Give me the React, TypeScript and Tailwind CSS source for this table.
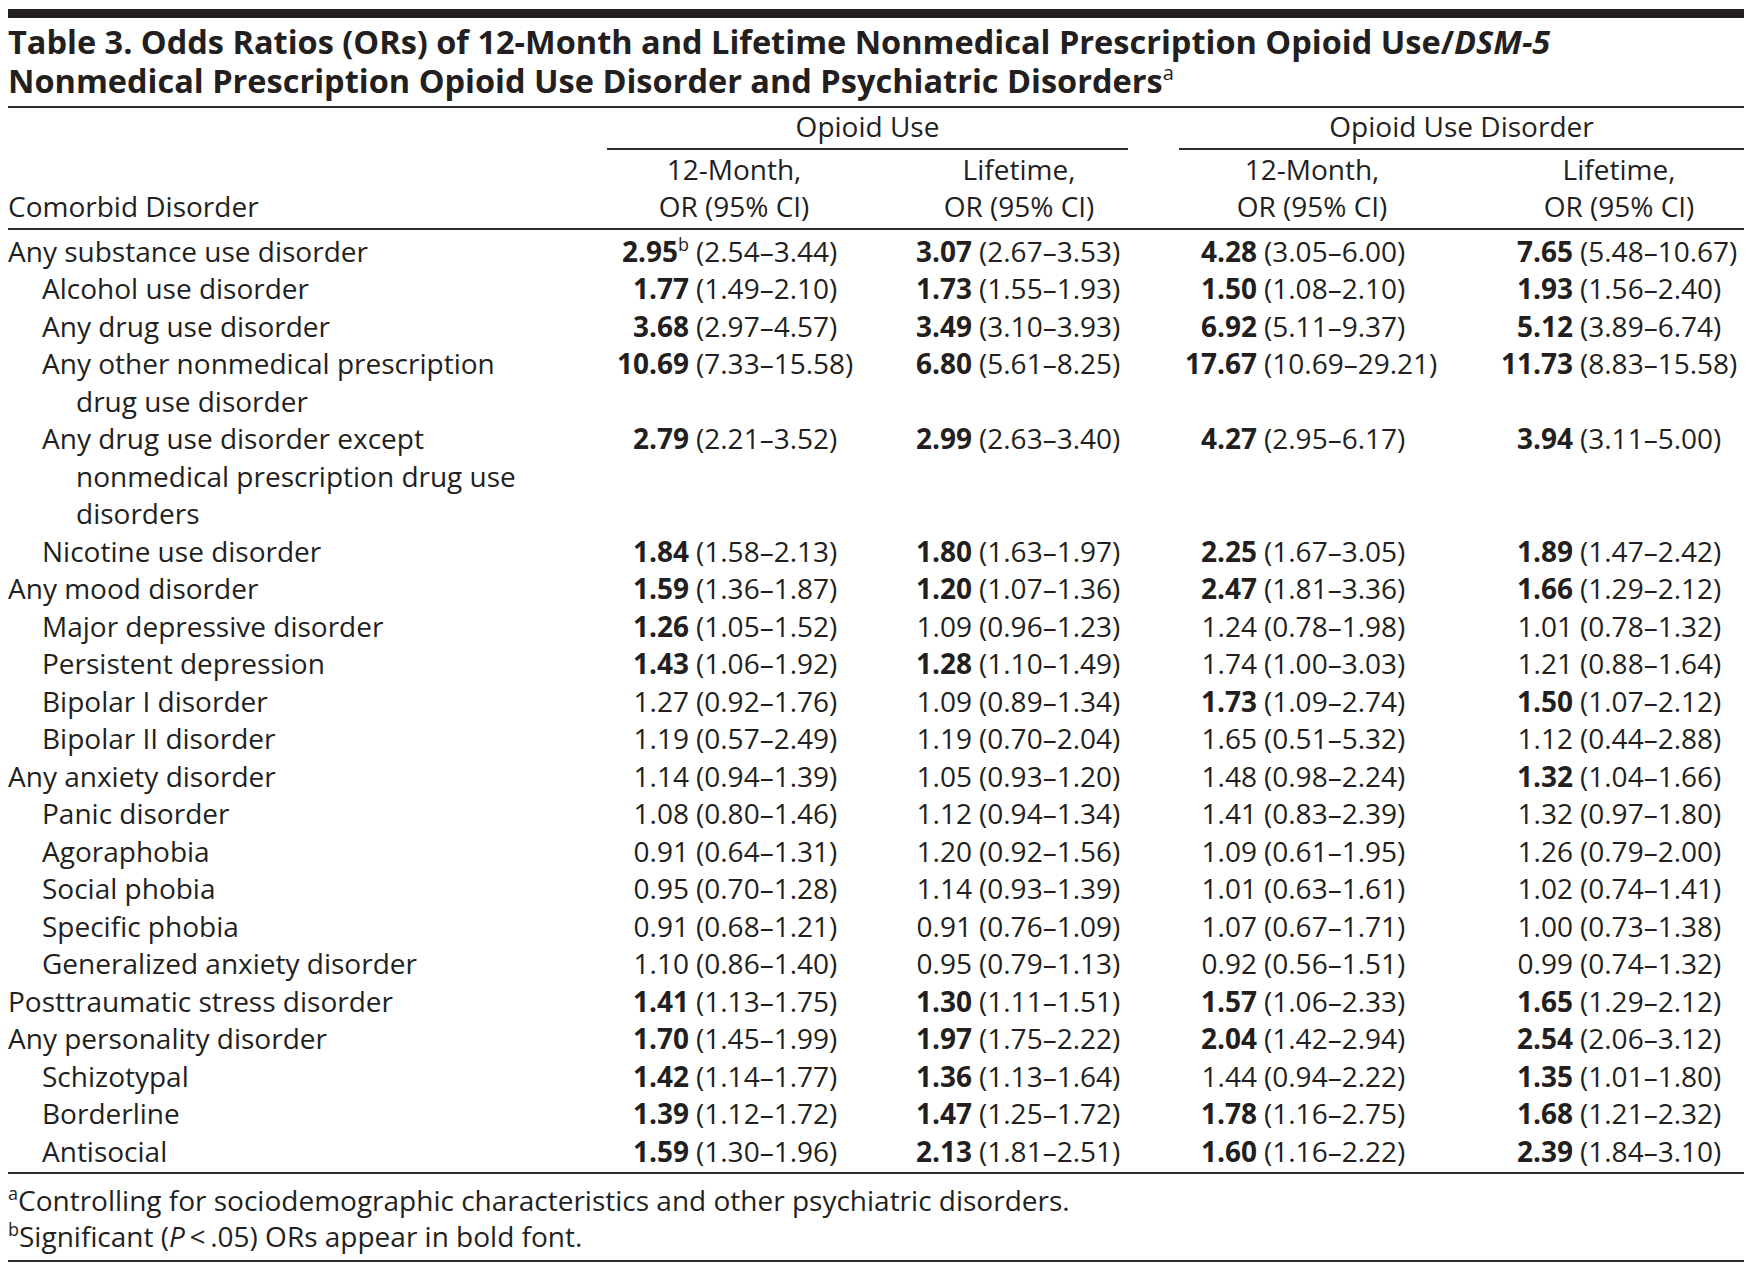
type Val = [string, string, boolean];

type Row = {
  lines: string[];
  level: 0 | 1;
  vals: Val[];
};

const rows: Row[] = [
  { lines: ["Any substance use disorder"], level: 0, vals: [["2.95", "(2.54–3.44)", true], ["3.07", "(2.67–3.53)", true], ["4.28", "(3.05–6.00)", true], ["7.65", "(5.48–10.67)", true]] },
  { lines: ["Alcohol use disorder"], level: 1, vals: [["1.77", "(1.49–2.10)", true], ["1.73", "(1.55–1.93)", true], ["1.50", "(1.08–2.10)", true], ["1.93", "(1.56–2.40)", true]] },
  { lines: ["Any drug use disorder"], level: 1, vals: [["3.68", "(2.97–4.57)", true], ["3.49", "(3.10–3.93)", true], ["6.92", "(5.11–9.37)", true], ["5.12", "(3.89–6.74)", true]] },
  { lines: ["Any other nonmedical prescription", "drug use disorder"], level: 1, vals: [["10.69", "(7.33–15.58)", true], ["6.80", "(5.61–8.25)", true], ["17.67", "(10.69–29.21)", true], ["11.73", "(8.83–15.58)", true]] },
  { lines: ["Any drug use disorder except", "nonmedical prescription drug use", "disorders"], level: 1, vals: [["2.79", "(2.21–3.52)", true], ["2.99", "(2.63–3.40)", true], ["4.27", "(2.95–6.17)", true], ["3.94", "(3.11–5.00)", true]] },
  { lines: ["Nicotine use disorder"], level: 1, vals: [["1.84", "(1.58–2.13)", true], ["1.80", "(1.63–1.97)", true], ["2.25", "(1.67–3.05)", true], ["1.89", "(1.47–2.42)", true]] },
  { lines: ["Any mood disorder"], level: 0, vals: [["1.59", "(1.36–1.87)", true], ["1.20", "(1.07–1.36)", true], ["2.47", "(1.81–3.36)", true], ["1.66", "(1.29–2.12)", true]] },
  { lines: ["Major depressive disorder"], level: 1, vals: [["1.26", "(1.05–1.52)", true], ["1.09", "(0.96–1.23)", false], ["1.24", "(0.78–1.98)", false], ["1.01", "(0.78–1.32)", false]] },
  { lines: ["Persistent depression"], level: 1, vals: [["1.43", "(1.06–1.92)", true], ["1.28", "(1.10–1.49)", true], ["1.74", "(1.00–3.03)", false], ["1.21", "(0.88–1.64)", false]] },
  { lines: ["Bipolar I disorder"], level: 1, vals: [["1.27", "(0.92–1.76)", false], ["1.09", "(0.89–1.34)", false], ["1.73", "(1.09–2.74)", true], ["1.50", "(1.07–2.12)", true]] },
  { lines: ["Bipolar II disorder"], level: 1, vals: [["1.19", "(0.57–2.49)", false], ["1.19", "(0.70–2.04)", false], ["1.65", "(0.51–5.32)", false], ["1.12", "(0.44–2.88)", false]] },
  { lines: ["Any anxiety disorder"], level: 0, vals: [["1.14", "(0.94–1.39)", false], ["1.05", "(0.93–1.20)", false], ["1.48", "(0.98–2.24)", false], ["1.32", "(1.04–1.66)", true]] },
  { lines: ["Panic disorder"], level: 1, vals: [["1.08", "(0.80–1.46)", false], ["1.12", "(0.94–1.34)", false], ["1.41", "(0.83–2.39)", false], ["1.32", "(0.97–1.80)", false]] },
  { lines: ["Agoraphobia"], level: 1, vals: [["0.91", "(0.64–1.31)", false], ["1.20", "(0.92–1.56)", false], ["1.09", "(0.61–1.95)", false], ["1.26", "(0.79–2.00)", false]] },
  { lines: ["Social phobia"], level: 1, vals: [["0.95", "(0.70–1.28)", false], ["1.14", "(0.93–1.39)", false], ["1.01", "(0.63–1.61)", false], ["1.02", "(0.74–1.41)", false]] },
  { lines: ["Specific phobia"], level: 1, vals: [["0.91", "(0.68–1.21)", false], ["0.91", "(0.76–1.09)", false], ["1.07", "(0.67–1.71)", false], ["1.00", "(0.73–1.38)", false]] },
  { lines: ["Generalized anxiety disorder"], level: 1, vals: [["1.10", "(0.86–1.40)", false], ["0.95", "(0.79–1.13)", false], ["0.92", "(0.56–1.51)", false], ["0.99", "(0.74–1.32)", false]] },
  { lines: ["Posttraumatic stress disorder"], level: 0, vals: [["1.41", "(1.13–1.75)", true], ["1.30", "(1.11–1.51)", true], ["1.57", "(1.06–2.33)", true], ["1.65", "(1.29–2.12)", true]] },
  { lines: ["Any personality disorder"], level: 0, vals: [["1.70", "(1.45–1.99)", true], ["1.97", "(1.75–2.22)", true], ["2.04", "(1.42–2.94)", true], ["2.54", "(2.06–3.12)", true]] },
  { lines: ["Schizotypal"], level: 1, vals: [["1.42", "(1.14–1.77)", true], ["1.36", "(1.13–1.64)", true], ["1.44", "(0.94–2.22)", false], ["1.35", "(1.01–1.80)", true]] },
  { lines: ["Borderline"], level: 1, vals: [["1.39", "(1.12–1.72)", true], ["1.47", "(1.25–1.72)", true], ["1.78", "(1.16–2.75)", true], ["1.68", "(1.21–2.32)", true]] },
  { lines: ["Antisocial"], level: 1, vals: [["1.59", "(1.30–1.96)", true], ["2.13", "(1.81–2.51)", true], ["1.60", "(1.16–2.22)", true], ["2.39", "(1.84–3.10)", true]] },
];

// width of the right-aligned OR part in each data column
const orWidths = ["w-[89px]", "w-[104px]", "w-[87px]", "w-[119px]"];

function ValueCell({ val, col, sup }: { val: Val; col: number; sup?: string }) {
  const [or, ci, bold] = val;
  return (
    <div className="flex">
      <span className={`${orWidths[col]} shrink-0 text-right ${bold ? "font-bold" : ""}`}>
        {or}
        {sup && <sup className="font-normal text-[18px] relative top-[-11px]">{sup}</sup>}
      </span>
      <span className="pl-[7px] whitespace-nowrap">{ci}</span>
    </div>
  );
}

export default function App() {
  return (
    <div className="w-[1752px] h-[1270px] bg-white px-2 pt-[9px] text-[#231f20] [font-family:'Open_Sans',sans-serif]">
      {/* Top bar */}
      <div className="h-[9px] bg-[#231f20]" />

      {/* Title */}
      <h1 className="pt-[4px] pb-[6px] text-[32.5px] leading-[39px] font-bold">
        <div className="h-[39px]">
          Table 3. Odds Ratios (ORs) of 12-Month and Lifetime Nonmedical Prescription Opioid Use/<i>DSM-5</i>
        </div>
        <div className="h-[39px]">
          Nonmedical Prescription Opioid Use Disorder and Psychiatric Disorders
          <sup className="text-[20px] font-normal relative top-[-13px]">a</sup>
        </div>
      </h1>

      {/* Table */}
      <div className="border-t-2 border-[#2b2b2b] text-[28px] leading-[37.5px]">
        <div className="grid grid-cols-[592px_268px_302px_284px_290px]">
          {/* spanner headers */}
          <div />
          <div className="col-span-2 ml-[7px] mr-[42px] pb-[2px] text-center border-b-2 border-[#2b2b2b]">Opioid Use</div>
          <div className="col-span-2 ml-[9px] pb-[2px] text-center border-b-2 border-[#2b2b2b]">Opioid Use Disorder</div>

          {/* column headers */}
          <div className="flex items-end pt-[1px] pb-[2px]">Comorbid Disorder</div>
          <div className="text-center pt-[1px] pb-[2px]">12-Month,<br />OR (95% CI)</div>
          <div className="text-center pt-[1px] pb-[2px]">Lifetime,<br />OR (95% CI)</div>
          <div className="text-center pt-[1px] pb-[2px]">12-Month,<br />OR (95% CI)</div>
          <div className="text-center pl-10 pt-[1px] pb-[2px]">Lifetime,<br />OR (95% CI)</div>

          <div className="col-span-5 border-t-2 border-[#2b2b2b] h-[5px]" />

          {rows.map((row, i) => (
            <div key={i} className="contents">
              <div className={row.level === 0 ? "" : "pl-[34px]"}>
                {row.lines.map((line, j) => (
                  <div key={j} className={j > 0 ? "pl-[34px]" : ""}>{line}</div>
                ))}
              </div>
              {row.vals.map((v, c) => (
                <ValueCell key={c} val={v} col={c} sup={i === 0 && c === 0 ? "b" : undefined} />
              ))}
            </div>
          ))}
        </div>

        {/* Footnotes */}
        <div className="mt-[2px] border-t-2 border-[#2b2b2b] pt-[8px] pb-[6px] leading-[36px]">
          <p>
            <sup className="text-[18px] relative top-[-11px]">a</sup>Controlling for sociodemographic characteristics and other psychiatric disorders.
          </p>
          <p>
            <sup className="text-[18px] relative top-[-11px]">b</sup>Significant (<i>P</i>&thinsp;&lt;&thinsp;.05) ORs appear in bold font.
          </p>
        </div>
        <div className="border-t-2 border-[#2b2b2b]" />
      </div>
    </div>
  );
}
